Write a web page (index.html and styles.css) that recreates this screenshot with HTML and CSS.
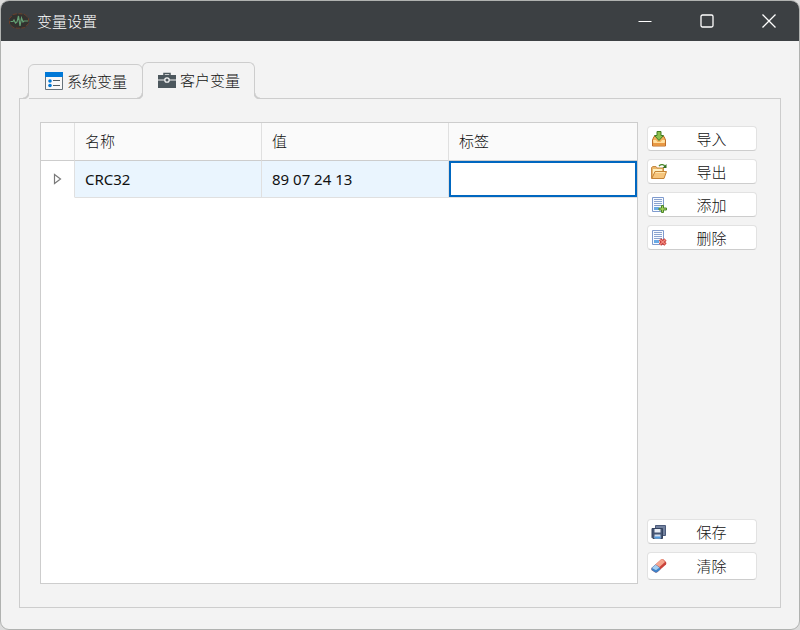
FILE: index.html
```html
<!DOCTYPE html>
<html lang="zh-CN">
<head>
  <meta charset="UTF-8">
  <meta name="viewport" content="width=device-width, initial-scale=1">
  <title>变量设置</title>
  <link rel="stylesheet" href="styles.css">
</head>
<body>
  <div class="window">
    <!-- Title bar -->
    <header class="titlebar">
      <svg class="app-icon" width="20" height="16" viewBox="0 0 20 16" fill="none">
        <path d="M4 1.500L8 .8h4l4 .7 3.500 4v5l-3.500 4-4 .7H8l-4-.7-3.500-4v-5z" fill="#32322f" stroke="#6b3f2b" stroke-dasharray="4 1.500"/>
        <path d="M1.500 8.500h2.500l1-1.500 1.500 3 1.500-1 1.500-6 1.500 10 1.500-8 1.500 4 1-1h4" stroke="#64a073" stroke-width="1.200"/>
      </svg>
      <h1 class="title">变量设置</h1>
      <button class="win-btn" type="button" aria-label="最小化">
        <svg width="14" height="14" viewBox="0 0 14 14" fill="none" stroke="#fff"><path d="M.5 7.500h13"/></svg>
      </button>
      <button class="win-btn" type="button" aria-label="最大化">
        <svg width="14" height="14" viewBox="0 0 14 14" fill="none" stroke="#fff" stroke-width="1.300"><rect x="1" y="1" width="12" height="12" rx="1.500"/></svg>
      </button>
      <button class="win-btn" type="button" aria-label="关闭">
        <svg width="14" height="14" viewBox="0 0 14 14" fill="none" stroke="#fff" stroke-width="1.300"><path d="M.5.5l13 13M13.500.5l-13 13"/></svg>
      </button>
    </header>

    <main class="content">
      <!-- Tabs -->
      <div class="tabs" role="tablist">
        <button class="tab" type="button" role="tab" aria-selected="false">
          <svg width="18" height="18" viewBox="0 0 18 18">
            <path d="M.5 1v16.500h17V1z" fill="#f8f8f8" stroke="#66727a"/>
            <path d="M0 0h18v5H0z" fill="#0078d7"/>
            <circle cx="5" cy="9" r="1.800" fill="#0078d7"/>
            <circle cx="5" cy="13.500" r="1.800" fill="#0078d7"/>
            <path d="M8 8.500h7M8 13.500h7" stroke="#4f5b62"/>
          </svg>
          <span>系统变量</span>
        </button>
        <button class="tab active" type="button" role="tab" aria-selected="true">
          <svg width="18" height="16" viewBox="0 0 18 16">
            <path d="M6 4V1.500h6V4" fill="none" stroke="#4c575d" stroke-width="1.500"/>
            <path d="M0 3h18v4.500H0zM0 8.500h18V16H0z" fill="#4c575d"/>
            <circle cx="9" cy="8" r="2.200" fill="#4c575d" stroke="#f3f3f3" stroke-width="1.300"/>
          </svg>
          <span>客户变量</span>
        </button>
      </div>

      <section class="panel" role="tabpanel">
        <!-- Variable grid -->
        <div class="grid">
          <table>
            <thead>
              <tr>
                <th class="marker"></th>
                <th class="col">名称</th>
                <th class="col">值</th>
                <th>标签</th>
              </tr>
            </thead>
            <tbody>
              <tr>
                <td class="marker">
                  <svg width="9" height="12" viewBox="0 0 9 12"><path d="M1.500 1.500v9L7.500 6z" fill="none" stroke="#7a7a7a" stroke-width="1.200"/></svg>
                </td>
                <td>CRC32</td>
                <td>89 07 24 13</td>
                <td class="editing"><input class="cell-input" type="text" aria-label="标签"></td>
              </tr>
            </tbody>
          </table>
        </div>

        <!-- Actions -->
        <div class="actions">
          <button class="btn" type="button">
            <svg width="16" height="16" viewBox="0 0 16 16">
              <path d="M1.500 9L3 5.500h10L14.500 9v6h-13z" fill="#f3b05c" stroke="#bc6c28"/>
              <path d="M2 9h3l1.500 2h3L11 9h3v1l-1 4H3z" fill="#ffe0a0"/>
              <path d="M2 12h12v2.500H2z" fill="#e99843"/>
              <path d="M6 .5h4v4h2.500L8 9.500 3.500 4.500H6z" fill="#8ac04b" stroke="#437b25"/>
            </svg>
            <span>导入</span>
          </button>
          <button class="btn" type="button">
            <svg width="16" height="16" viewBox="0 0 16 16">
              <path d="M.5 14.500V3.500L2 2.500h3l1 1.500h6.500v4" fill="#eab66a" stroke="#c78a43"/>
              <path d="M2 5h9v3H4l-2 4z" fill="#fff0c0"/>
              <path d="M.8 14.500L4 7.500h11.500l-2.500 7z" fill="#f6c57c" stroke="#c58336"/>
              <path d="M4.500 8.500h9.500" stroke="#ffe7b0"/>
              <path d="M8 2.200c2-2.500 5-2 6 .5" fill="none" stroke="#4d8a30" stroke-width="1.300"/>
              <path d="M11.500 4H15.500V0z" fill="#356f22"/>
            </svg>
            <span>导出</span>
          </button>
          <button class="btn" type="button">
            <svg width="16" height="16" viewBox="0 0 16 16">
              <path d="M1.500.5h11v14h-11z" fill="#f8fbff" stroke="#7f9bce"/>
              <path d="M3 2.500h8M3 4.500h8M3 6.500h8M3 8.500h8" stroke="#8aa3cf"/>
              <path d="M3 10h5v3H3z" fill="#69aae5"/>
              <path d="M10.500 8.500h2v2.500H15.500v2H12.500v2.500h-2V13H8v-2h2.500z" fill="#a5d15e" stroke="#4c862b"/>
            </svg>
            <span>添加</span>
          </button>
          <button class="btn" type="button">
            <svg width="16" height="16" viewBox="0 0 16 16">
              <path d="M1.500.5h11v14h-11z" fill="#f8fbff" stroke="#7f9bce"/>
              <path d="M3 2.500h8M3 4.500h8M3 6.500h8M3 8.500h8" stroke="#8aa3cf"/>
              <path d="M3 10h5v3H3z" fill="#69aae5"/>
              <path d="M9 9.500l5.500 5M14.500 9.500l-5.500 5" stroke="#c83b37" stroke-width="3.400"/>
              <path d="M9 9.500l5.500 5M14.500 9.500l-5.500 5" stroke="#f28b80" stroke-width="1.200"/>
            </svg>
            <span>删除</span>
          </button>
          <button class="btn save" type="button">
            <svg width="16" height="16" viewBox="0 0 16 16">
              <path d="M4.500 1.500h10v10h-10z" fill="#73829f" stroke="#4c5b7b"/>
              <path d="M1 4.500h10.500v10H2L1 13.500z" fill="#455574" stroke="#34435f"/>
              <path d="M3.500 5h6v3.500h-6z" fill="#e8edf5"/>
              <path d="M3.500 10.500h6v4h-6z" fill="#d3deee"/>
              <path d="M3.500 12.500h6v2h-6z" fill="#4e9ae0"/>
            </svg>
            <span>保存</span>
          </button>
          <button class="btn tall" type="button">
            <svg width="16" height="16" viewBox="0 0 16 16">
              <path d="M.5 10L10 1.500q1.500-1 2.500 0L15 4q.8 1 0 2.500L6.500 14q-1.500 1-3 0L.5 12z" fill="#c9423a"/>
              <path d="M4.500 6.500L10 1.500q1-.8 2 0L14 4 8.500 9z" fill="#f5a68f"/>
              <path d="M.5 10l4-3.500 4 3 1 2-3 2.500q-1.500 1-3 0L.5 12z" fill="#3e82c8"/>
              <path d="M1 10l3.500-3.300 4 2.800L5 12.300z" fill="#a5cef0"/>
            </svg>
            <span>清除</span>
          </button>
        </div>
      </section>
    </main>
  </div>
</body>
</html>
```

FILE: styles.css
```css
* {
  box-sizing: border-box;
}

body {
  margin: 0;
  background: #dcdcdc;
  color: #111;
  font-family: "Noto Sans", "Noto Sans CJK SC", sans-serif;
  font-size: 15px;
  line-height: 20px;
}

button,
input {
  font: inherit;
  color: inherit;
}

button {
  border: none;
  padding: 0;
  background: none;
}

svg {
  display: block;
  flex: none;
}

.window {
  display: flex;
  flex-direction: column;
  height: 100vh;
  border: 1px solid #b0b2b0;
  border-radius: 9px;
  background: #f3f3f3;
  overflow: hidden;
}

/* Title bar */
.titlebar {
  display: flex;
  align-items: center;
  height: 40px;
  padding-left: 8px;
  background: #3c4043;
  color: #fff;
}

.title {
  flex: 1;
  margin: 0 0 0 8px;
  font-size: 15px;
}

.win-btn {
  display: flex;
  align-items: center;
  justify-content: center;
  width: 62px;
  height: 40px;
  padding-left: 2px;
}

.content {
  display: flex;
  flex: 1;
  flex-direction: column;
  padding: 21px 18px;
}

/* Tabs overlap the top line of the panel */
.tabs {
  display: flex;
  align-items: flex-end;
  margin-bottom: -1px;
  padding-left: 9px;
}

.tab {
  position: relative;
  display: flex;
  align-items: center;
  gap: 4px;
  height: 35px;
  padding: 0 15px 2px 16px;
  border: 1px solid #cdcdcd;
  border-radius: 6px 6px 0 0;
  background: #f3f3f3;
}

.tab.active {
  z-index: 1;
  height: 37px;
  margin-left: -1px;
  padding: 0 14px 2px 15px;
  border-bottom-color: #f3f3f3;
}

/* rounded feet where a tab meets the panel */
.tab::before,
.tab.active::after {
  content: "";
  position: absolute;
  bottom: -1px;
  width: 6px;
  height: 6px;
}

.tab::before {
  left: -6px;
  background: radial-gradient(circle at 0 0, #f3f3f3 4px, #cdcdcd 5px, #cdcdcd 6px, #f3f3f3 7px);
}

.tab.active::after {
  right: -6px;
  background: radial-gradient(circle at 100% 0, #f3f3f3 4px, #cdcdcd 5px, #cdcdcd 6px, #f3f3f3 7px);
}

.panel {
  display: flex;
  flex: 1;
  gap: 9px;
  padding: 23px 23px 23px 20px;
  border: 1px solid #cdcdcd;
}

/* Grid */
.grid {
  flex: 1;
  border: 1px solid #cdcdcd;
  background: #fff;
}

table {
  width: 100%;
  table-layout: fixed;
  border-collapse: separate;
  border-spacing: 0;
}

th,
td {
  height: 37px;
  padding: 0 10px;
  border-right: 1px solid #e0e0e0;
  border-bottom: 1px solid #e0e0e0;
  text-align: left;
}

th {
  height: 38px;
  padding-bottom: 2px;
  border-bottom-color: #cdcdcd;
  background: #fafafa;
}

td {
  background: #eaf5fe;
}

th:last-child,
td:last-child {
  border-right: none;
}

.marker {
  width: 34px;
}

.col {
  width: 187px;
}

td.marker {
  padding-left: 12px;
  border-bottom-color: #fff;
  background: #fff;
}

td.editing {
  padding: 0;
}

.cell-input {
  display: block;
  width: 100%;
  height: 36px;
  padding: 0 8px;
  border: 2px solid #0067c0;
  border-radius: 0;
  background: #fff;
  outline: none;
}

/* Actions */
.actions {
  display: flex;
  flex-direction: column;
  gap: 8px;
  width: 110px;
  padding: 4px 0;
}

.btn {
  display: flex;
  align-items: center;
  height: 25px;
  padding-left: 3px;
  border: 1px solid #e2e2e2;
  border-bottom-color: #cdcdcd;
  border-radius: 4px;
  background: #fff;
}

.btn span {
  flex: 1;
  text-align: center;
}

.btn.save {
  margin-top: auto;
}

.btn.tall {
  height: 28px;
}

.title,
.tab,
.btn,
th {
  font-weight: 300;
}
```
